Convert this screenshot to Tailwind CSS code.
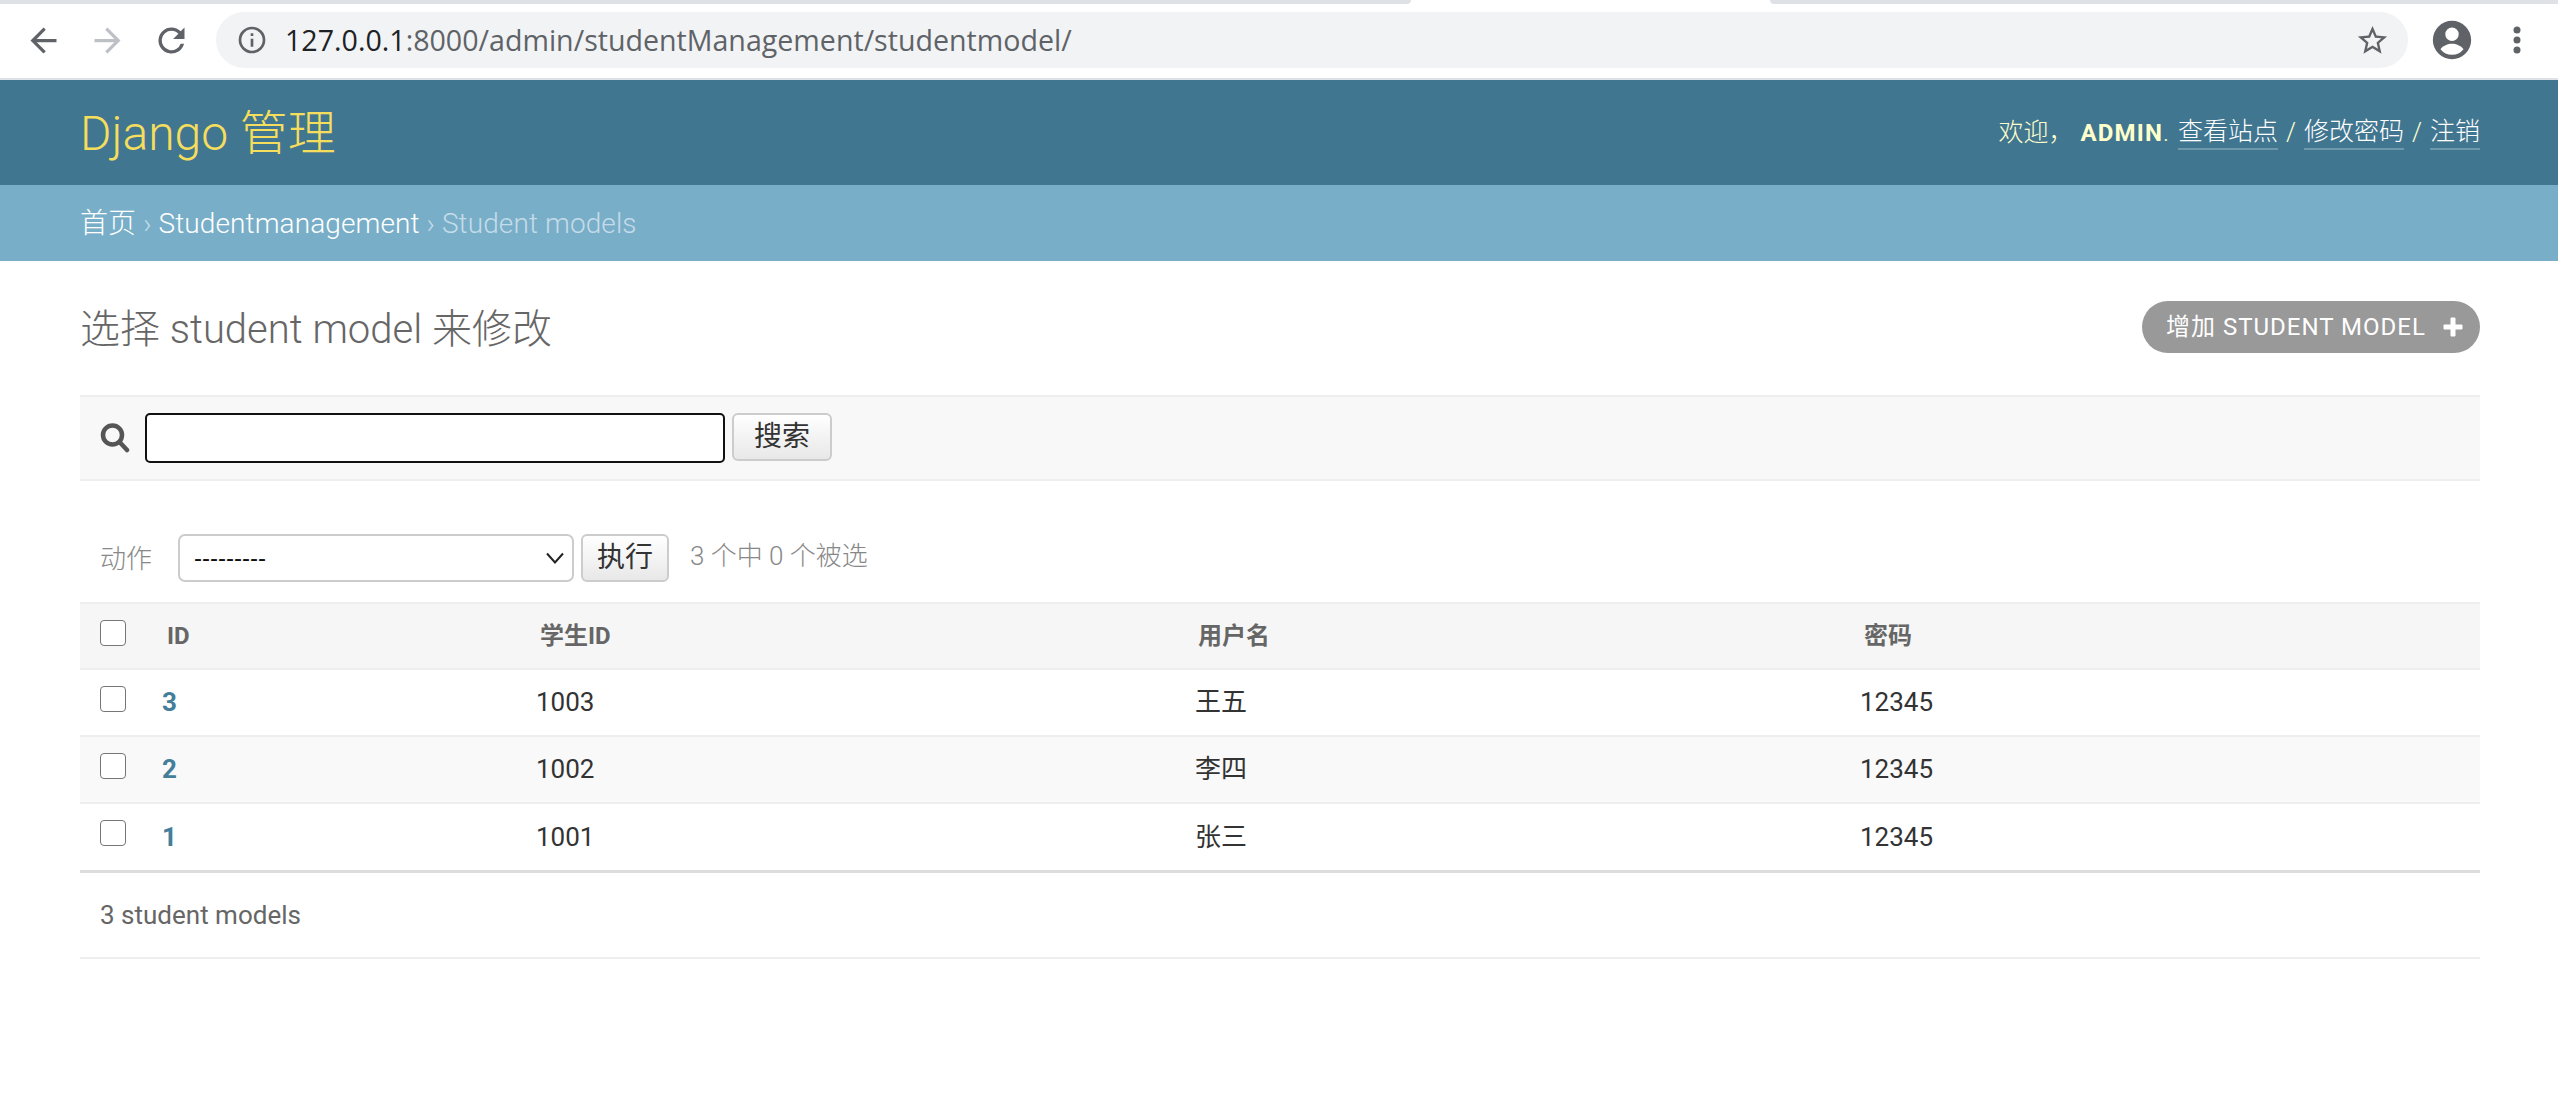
<!DOCTYPE html>
<html><head><meta charset="utf-8">
<script src="https://cdn.jsdelivr.net/npm/@tailwindcss/browser@4"></script>
</head>
<body class="bg-white font-['Roboto','Noto_Sans_CJK_SC',sans-serif] text-[#333] overflow-hidden">
<div class="w-[2558px] h-[1108px] flex flex-col">
  <!-- browser chrome -->
  <div class="h-[4px] flex bg-white">
    <div class="w-[1411px] bg-[#dee1e6] rounded-br-[8px]"></div><div class="w-[359px]"></div><div class="flex-1 bg-[#dee1e6] rounded-bl-[8px]"></div>
  </div>
  <div class="h-[74px] flex items-center bg-white pb-[2px]">
    <div class="w-[216px] flex items-center gap-[25px] pl-[24px] shrink-0">
      <svg width="39" height="39" viewBox="0 0 24 24" fill="#5f6368"><path d="M20 11H7.83l5.59-5.59L12 4l-8 8 8 8 1.41-1.41L7.83 13H20v-2z"/></svg>
      <svg width="39" height="39" viewBox="0 0 24 24" fill="#bdc1c6"><path d="M12 4l-1.41 1.41L16.17 11H4v2h12.17l-5.58 5.59L12 20l8-8z"/></svg>
      <svg width="39" height="39" viewBox="0 0 24 24" fill="#5f6368"><path d="M17.65 6.35A7.96 7.96 0 0 0 12 4a8 8 0 1 0 7.73 10h-2.08A6 6 0 1 1 12 6c1.66 0 3.14.69 4.22 1.78L13 11h7V4l-2.35 2.35z"/></svg>
    </div>
    <div class="w-[2192px] h-[56px] rounded-full bg-[#f1f3f4] flex items-center shrink-0">
      <svg class="ml-[20px]" width="32" height="32" viewBox="0 0 24 24" fill="#5f6368"><path d="M11 7h2v2h-2zm0 4h2v6h-2zm1-9a10 10 0 1 0 0 20 10 10 0 0 0 0-20zm0 18a8 8 0 1 1 0-16 8 8 0 0 1 0 16z"/></svg>
      <div class="ml-[17px] text-[28.6px] leading-none text-[#5f6368] font-['Open_Sans','Roboto',sans-serif]"><span class="text-[#202124]">127.0.0.1</span>:8000/admin/studentManagement/studentmodel/</div>
      <svg class="ml-auto mr-[18px]" width="35" height="35" viewBox="0 0 24 24" fill="#5f6368"><path d="M22 9.24l-7.19-.62L12 2 9.19 8.63 2 9.24l5.46 4.73L5.82 21 12 17.27 18.18 21l-1.63-7.03L22 9.24zM12 15.4l-3.76 2.27 1-4.28-3.32-2.88 4.38-.38L12 6.1l1.71 4.04 4.38.38-3.32 2.88 1 4.28L12 15.4z"/></svg>
    </div>
    <svg class="ml-[21px]" width="46" height="46" viewBox="0 0 24 24" fill="#5f6368"><path d="M12 2a10 10 0 1 0 0 20 10 10 0 0 0 0-20zm0 3.5a3.5 3.5 0 1 1 0 7 3.5 3.5 0 0 1 0-7zm0 14.2a7.7 7.7 0 0 1-6-2.9c1.2-1.8 4-2.8 6-2.8s4.8 1 6 2.8a7.7 7.7 0 0 1-6 2.9z"/></svg>
    <svg class="ml-[26px]" width="32" height="32" viewBox="0 0 32 32" fill="#5f6368"><circle cx="16" cy="6" r="3.5"/><circle cx="16" cy="16" r="3.5"/><circle cx="16" cy="26" r="3.5"/></svg>
  </div>
  <div class="h-[2px] bg-[#dee1e6]"></div>

  <!-- header -->
  <div class="h-[105px] bg-[#417690] flex items-center justify-between pl-[80px] pr-[78px]">
    <div class="text-[48px] leading-none font-light text-[#f5dd5d] pt-[3px]">Django 管理</div>
    <div class="text-[25px] font-light text-[#ffc] flex items-center pt-[1px]">
      <span>欢迎，</span><strong class="font-bold text-[24px] tracking-[1.2px] ml-[7px]">ADMIN</strong><span class="mr-[9px]">.</span>
      <a class="text-white border-b-2 border-white/25 leading-[32px]">查看站点</a><span class="mx-[8px]">/</span>
      <a class="text-white border-b-2 border-white/25 leading-[32px]">修改密码</a><span class="mx-[8px]">/</span>
      <a class="text-white border-b-2 border-white/25 leading-[32px]">注销</a>
    </div>
  </div>
  <!-- breadcrumbs -->
  <div class="h-[76px] bg-[#79aec8] flex items-center pl-[80px] pt-[2px] text-[28px] font-light text-white tracking-[0.1px]">
    <a>首页</a><span class="text-[#c4dce8]">&nbsp;›&nbsp;</span><a>Studentmanagement</a><span class="text-[#c4dce8]">&nbsp;›&nbsp;Student models</span>
  </div>

  <!-- content -->
  <div class="pl-[80px] pr-[78px] flex-1">
    <div class="flex items-center justify-between h-[52px] mt-[40px]">
      <h1 class="text-[40px] font-light text-[#666] leading-none pt-[5px]">选择 student model 来修改</h1>
      <a class="w-[338px] h-[52px] rounded-full bg-[#999] text-white text-[24px] font-normal tracking-[1px] flex items-center pl-[24px]">增加 STUDENT MODEL
        <svg class="ml-auto mr-[17px]" width="20" height="20" viewBox="0 0 20 20" fill="#fff"><path d="M8 1h4v7h7v4h-7v7H8v-7H1V8h7z" stroke="#fff" stroke-linejoin="round"/></svg>
      </a>
    </div>

    <div class="mt-[42px] h-[86px] bg-[#f8f8f8] border-y-2 border-[#eee] flex items-center pl-[20px]">
      <svg width="30" height="30" viewBox="0 0 30 30" fill="none" stroke="#555" stroke-width="4.5"><circle cx="12.5" cy="12" r="9.5"/><path d="M19.5 19l7.5 8" stroke-linecap="round"/></svg>
      <input class="ml-[15px] w-[580px] h-[50px] bg-white border-[2px] border-[#111] rounded-[5px]" />
      <button class="ml-[7px] w-[100px] h-[48px] -mt-[2px] rounded-[6px] border-2 border-[#ccc] bg-gradient-to-b from-white to-[#e8e8e8] text-[28px] font-normal text-[#333] leading-none">搜索</button>
    </div>

    <div class="h-[48px] mt-[53px] flex items-center pl-[20px] text-[#888] text-[26px] font-light">
      <span class="pt-[2px]">动作</span>
      <div class="ml-[26px] w-[396px] h-[48px] border-2 border-[#ccc] rounded-[7px] flex items-center justify-between pl-[14px] pr-[7px] text-[#111] text-[24px] font-normal font-['Liberation_Sans',sans-serif]"><span>---------</span>
        <svg width="20" height="12" viewBox="0 0 20 12" fill="none" stroke="#222" stroke-width="2"><path d="M2 1.5l8 9 8-9"/></svg></div>
      <button class="ml-[7px] w-[88px] h-[48px] rounded-[6px] border-2 border-[#ccc] bg-gradient-to-b from-white to-[#e8e8e8] text-[28px] font-normal text-[#333] leading-none">执行</button>
      <span class="ml-[21px] -mt-[3px]">3 个中 0 个被选</span>
    </div>

    <div class="mt-[20px]">
      <div class="grid grid-cols-[81px_375px_659px_665px_1fr] h-[68px] bg-[#f6f6f6] border-y-2 border-[#eee] text-[24px] font-bold text-[#666] items-center">
        <div class="pl-[20px] self-start flex pt-[16px]"><span class="w-[26px] h-[26px] border border-[#767676] rounded-[4px] bg-white"></span></div>
        <div class="pl-[6px]">ID</div><div class="pl-[4px]">学生ID</div><div class="pl-[3px]">用户名</div><div class="pl-[4px]">密码</div>
      </div>
      <div class="grid grid-cols-[81px_375px_659px_665px_1fr] h-[67px] border-b-2 border-[#eee] text-[26px] font-normal text-[#333] items-center">
        <div class="pl-[20px] self-start flex pt-[16px]"><span class="w-[26px] h-[26px] border border-[#767676] rounded-[4px] bg-white"></span></div>
        <div class="pl-[1px] font-bold text-[#447e9b]">3</div><div>1003</div><div>王五</div><div>12345</div>
      </div>
      <div class="grid grid-cols-[81px_375px_659px_665px_1fr] h-[67px] bg-[#f9f9f9] border-b-2 border-[#eee] text-[26px] font-normal text-[#333] items-center">
        <div class="pl-[20px] self-start flex pt-[16px]"><span class="w-[26px] h-[26px] border border-[#767676] rounded-[4px] bg-white"></span></div>
        <div class="pl-[1px] font-bold text-[#447e9b]">2</div><div>1002</div><div>李四</div><div>12345</div>
      </div>
      <div class="grid grid-cols-[81px_375px_659px_665px_1fr] h-[69px] border-b-[3px] border-[#ddd] text-[26px] font-normal text-[#333] items-center">
        <div class="pl-[20px] self-start flex pt-[16px]"><span class="w-[26px] h-[26px] border border-[#767676] rounded-[4px] bg-white"></span></div>
        <div class="pl-[1px] font-bold text-[#447e9b]">1</div><div>1001</div><div>张三</div><div>12345</div>
      </div>
      <div class="h-[86px] border-b-2 border-[#eee] flex items-center pl-[20px] text-[26px] font-normal text-[#666]">3 student models</div>
    </div>
  </div>
</div>
</body></html>
